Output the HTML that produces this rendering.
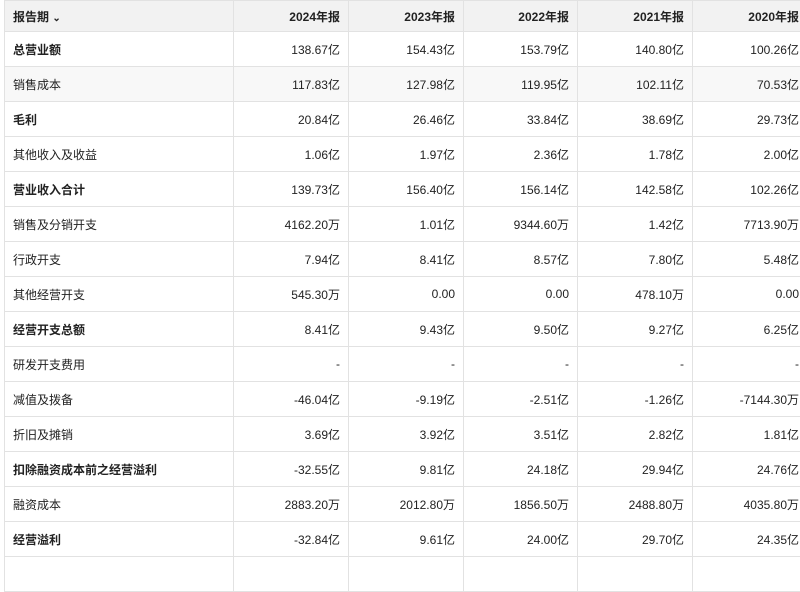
<!DOCTYPE html>
<html><head><meta charset="utf-8"><style>
body{margin:0;background:#fff;width:800px;height:565px;overflow:hidden;font-family:"Liberation Sans","Noto Sans CJK SC",sans-serif;font-size:12px;color:#222}
table{position:absolute;left:4px;top:0;border-collapse:collapse;table-layout:fixed;width:803px}
td,th{border:1px solid #e2e2e2;height:34px;padding:0 8px;text-align:right;white-space:nowrap;overflow:hidden}
th{background:#f2f2f2;height:30px;font-weight:bold}
td:first-child,th:first-child{text-align:left}
tr.b td:first-child{font-weight:bold}
tr.g td{background:#f8f8f8}
</style></head><body>
<table>
<colgroup><col style="width:229px"><col style="width:115px"><col style="width:115px"><col style="width:114px"><col style="width:115px"><col style="width:115px"></colgroup>
<tr><th>报告期 <span style="font-size:10px">&#8964;</span></th><th>2024年报</th><th>2023年报</th><th>2022年报</th><th>2021年报</th><th>2020年报</th></tr>
<tr class="b"><td>总营业额</td><td>138.67亿</td><td>154.43亿</td><td>153.79亿</td><td>140.80亿</td><td>100.26亿</td></tr>
<tr class="g"><td>销售成本</td><td>117.83亿</td><td>127.98亿</td><td>119.95亿</td><td>102.11亿</td><td>70.53亿</td></tr>
<tr class="b"><td>毛利</td><td>20.84亿</td><td>26.46亿</td><td>33.84亿</td><td>38.69亿</td><td>29.73亿</td></tr>
<tr><td>其他收入及收益</td><td>1.06亿</td><td>1.97亿</td><td>2.36亿</td><td>1.78亿</td><td>2.00亿</td></tr>
<tr class="b"><td>营业收入合计</td><td>139.73亿</td><td>156.40亿</td><td>156.14亿</td><td>142.58亿</td><td>102.26亿</td></tr>
<tr><td>销售及分销开支</td><td>4162.20万</td><td>1.01亿</td><td>9344.60万</td><td>1.42亿</td><td>7713.90万</td></tr>
<tr><td>行政开支</td><td>7.94亿</td><td>8.41亿</td><td>8.57亿</td><td>7.80亿</td><td>5.48亿</td></tr>
<tr><td>其他经营开支</td><td>545.30万</td><td>0.00</td><td>0.00</td><td>478.10万</td><td>0.00</td></tr>
<tr class="b"><td>经营开支总额</td><td>8.41亿</td><td>9.43亿</td><td>9.50亿</td><td>9.27亿</td><td>6.25亿</td></tr>
<tr><td>研发开支费用</td><td>-</td><td>-</td><td>-</td><td>-</td><td>-</td></tr>
<tr><td>减值及拨备</td><td>-46.04亿</td><td>-9.19亿</td><td>-2.51亿</td><td>-1.26亿</td><td>-7144.30万</td></tr>
<tr><td>折旧及摊销</td><td>3.69亿</td><td>3.92亿</td><td>3.51亿</td><td>2.82亿</td><td>1.81亿</td></tr>
<tr class="b"><td>扣除融资成本前之经营溢利</td><td>-32.55亿</td><td>9.81亿</td><td>24.18亿</td><td>29.94亿</td><td>24.76亿</td></tr>
<tr><td>融资成本</td><td>2883.20万</td><td>2012.80万</td><td>1856.50万</td><td>2488.80万</td><td>4035.80万</td></tr>
<tr class="b"><td>经营溢利</td><td>-32.84亿</td><td>9.61亿</td><td>24.00亿</td><td>29.70亿</td><td>24.35亿</td></tr>
<tr><td></td><td></td><td></td><td></td><td></td><td></td></tr>
</table>
</body></html>
